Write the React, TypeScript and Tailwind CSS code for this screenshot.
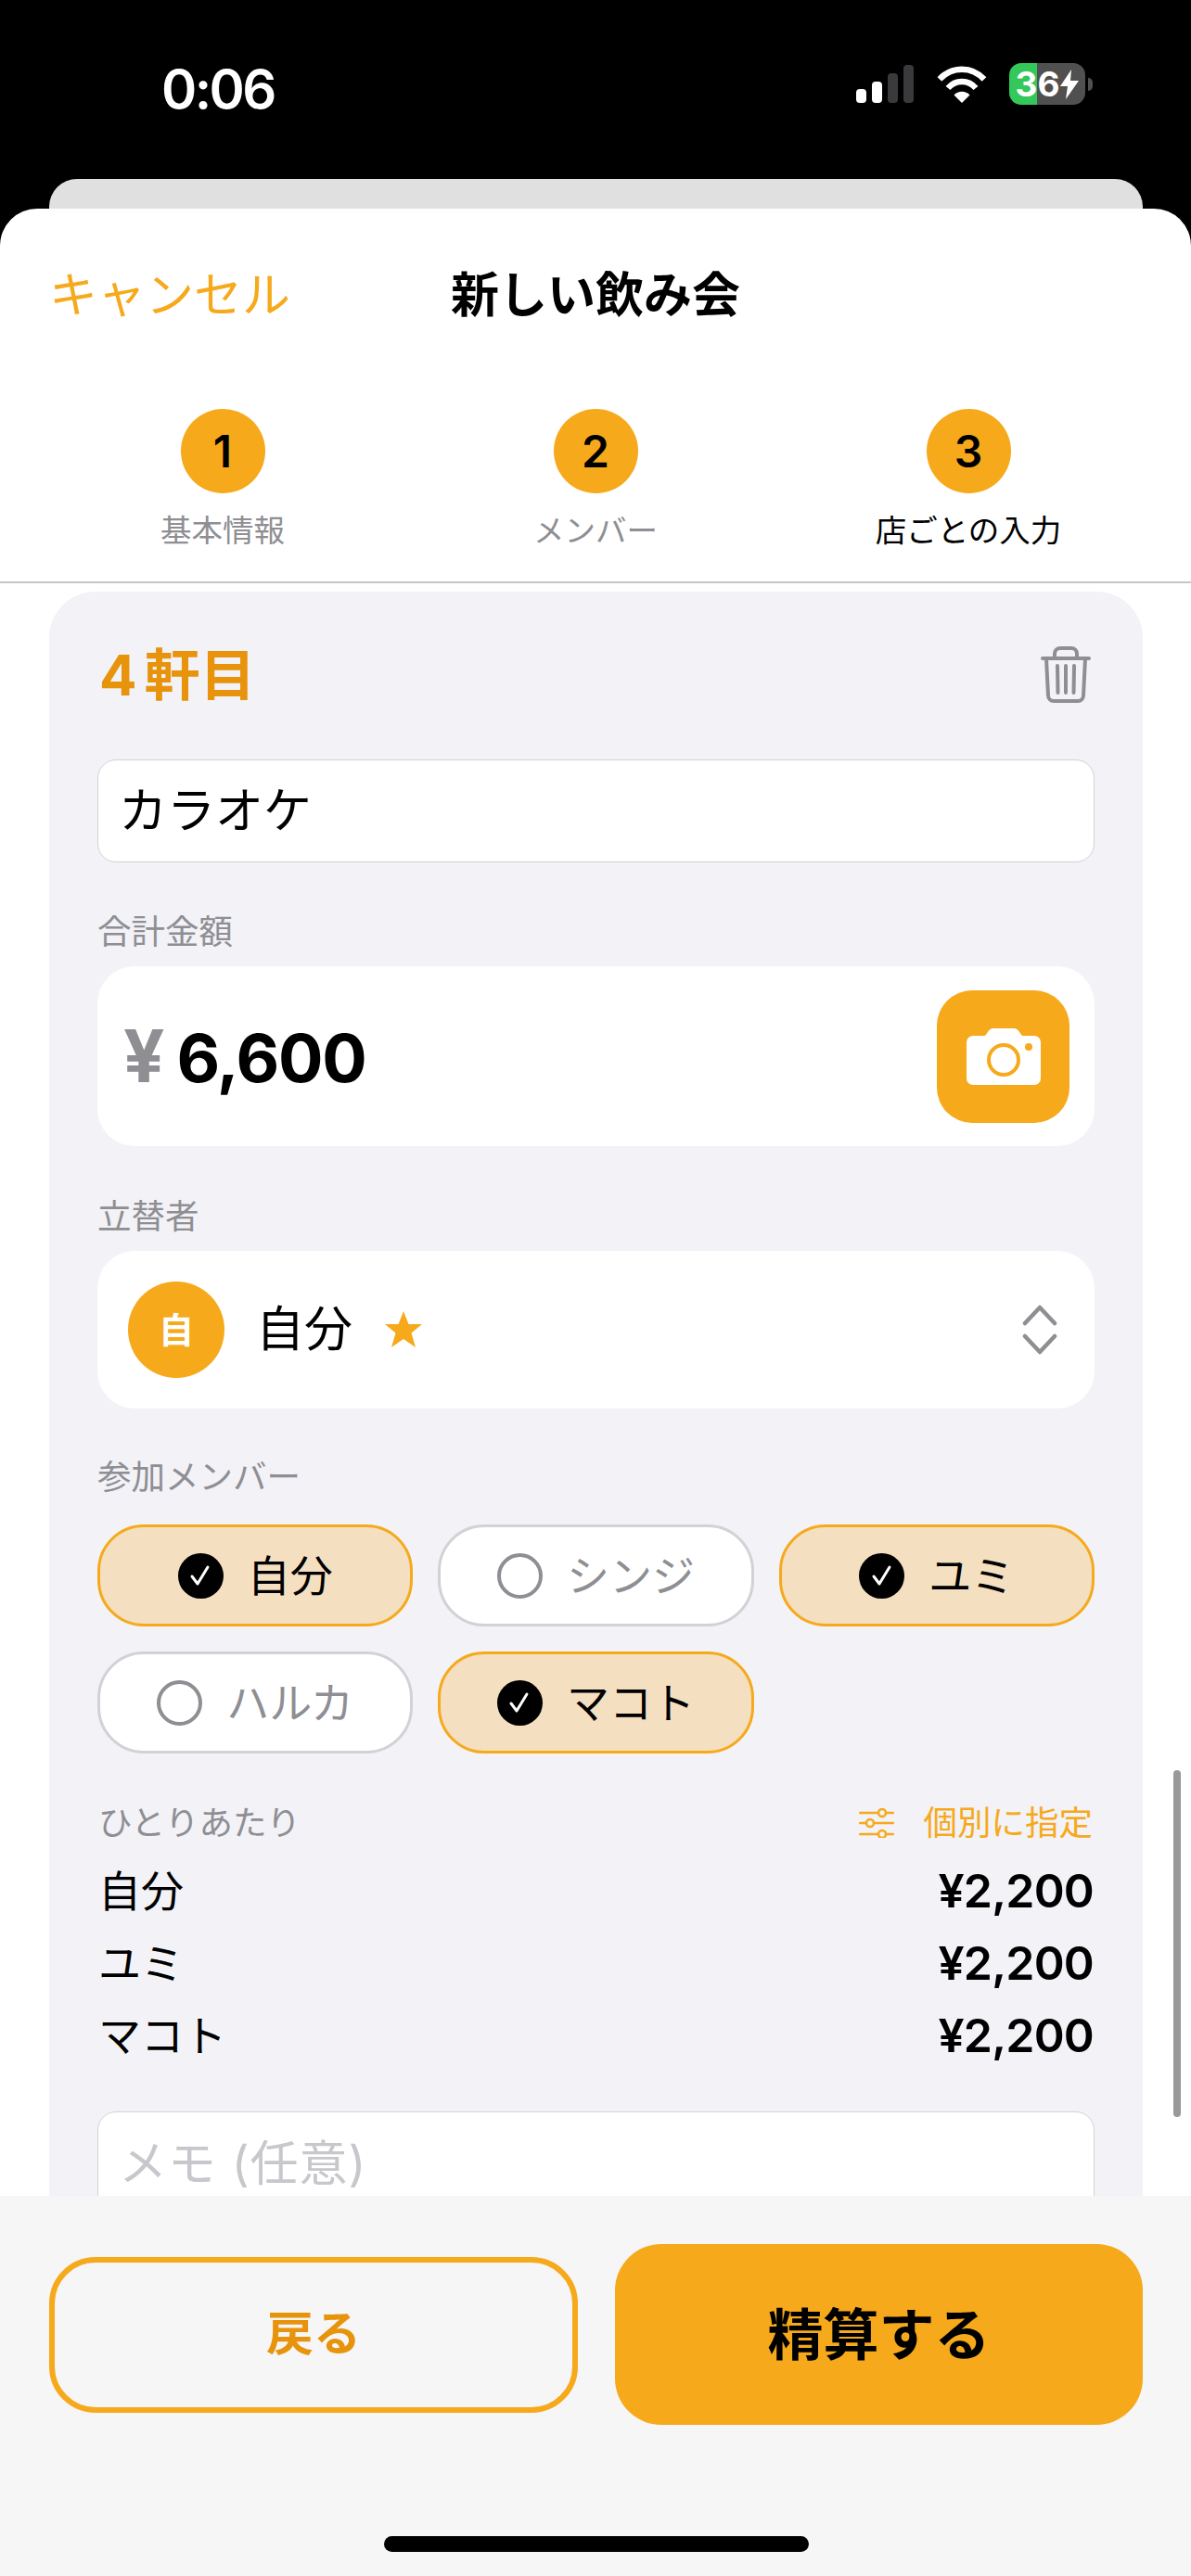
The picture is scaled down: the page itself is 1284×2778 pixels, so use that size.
const font = "font-['Inter','Noto_Sans_CJK_JP',sans-serif]";

const steps = [
	{ num: "1", label: "基本情報", active: false },
	{ num: "2", label: "メンバー", active: false },
	{ num: "3", label: "店ごとの入力", active: true },
];

const members = [
	{ name: "自分", on: true },
	{ name: "シンジ", on: false },
	{ name: "ユミ", on: true },
	{ name: "ハルカ", on: false },
	{ name: "マコト", on: true },
];

const shares = ["自分", "ユミ", "マコト"];

const StatusIcons = () => (
	<div className="flex items-center">
		<svg width="64" height="41" viewBox="0 0 64 41">
			<rect x="1" y="26" width="11" height="15" rx="4" fill="#fff" />
			<rect x="18" y="18" width="11" height="23" rx="4" fill="#fff" />
			<rect x="35" y="9" width="11" height="32" rx="4" fill="#3a3a3c" />
			<rect x="52" y="0" width="11" height="41" rx="4" fill="#3a3a3c" />
		</svg>
		<svg className="ml-[24px]" width="54" height="41" viewBox="0 0 54 41" fill="none">
			<path d="M3 15.5C16 1 38 1 51 15.5" stroke="#fff" strokeWidth="6.5" />
			<path d="M12 25C20 15.5 34 15.5 42 25" stroke="#fff" strokeWidth="6.5" />
			<path d="M27 41L18.5 32.5C23 27.5 31 27.5 35.5 32.5Z" fill="#fff" />
		</svg>
		<div className="ml-[24px] flex h-[45px] w-[82px] items-center justify-center gap-[1px] rounded-[13px] bg-[linear-gradient(90deg,#34c759_36%,#505050_36%)] text-[37px] leading-none font-bold text-white">
			<span>36</span>
			<svg width="20" height="32" viewBox="0 0 20 32">
				<path d="M12 0L0 18H8L6 32L20 12H11Z" fill="#fff" />
			</svg>
		</div>
		<div className="ml-[3px] h-[14px] w-[5px] rounded-r-full bg-[#505050]" />
	</div>
);

const TrashIcon = () => (
	<svg width="54" height="62" viewBox="0 0 54 62" fill="none" stroke="#8e8e93" strokeWidth="4" strokeLinecap="round">
		<path d="M2 13H52" />
		<path d="M15 13V8a6 6 0 0 1 6-6H33a6 6 0 0 1 6 6V13" />
		<path d="M6 13L8 53a6 6 0 0 0 6 6H40a6 6 0 0 0 6-6L48 13" />
		<path d="M18 21L18.5 50M27 21V50M36 21L35.5 50" />
	</svg>
);

const CameraIcon = () => (
	<svg width="80" height="63" viewBox="0 0 80 63">
		<path
			d="M7 9H19C22 9 23 1 29 1H51C57 1 58 9 61 9H73A7 7 0 0 1 80 16V55A7 7 0 0 1 73 62H7A7 7 0 0 1 0 55V16A7 7 0 0 1 7 9Z"
			fill="#fff"
		/>
		<circle cx="40" cy="35" r="16" fill="#fff" stroke="#f6a91b" strokeWidth="4" />
		<circle cx="67" cy="21" r="4" fill="#f6a91b" />
	</svg>
);

const SlidersIcon = () => (
	<svg width="38" height="32" viewBox="0 0 38 32" fill="none" stroke="#f6a91b" strokeWidth="2.5" strokeLinecap="round">
		<path d="M1 5H21M29 5H37M1 16H8M16 16H37M1 28H21M29 28H37" />
		<circle cx="25" cy="5" r="4" />
		<circle cx="12" cy="16" r="4" />
		<circle cx="25" cy="28" r="4" />
	</svg>
);

const Label = ({ text }: { text: string }) => (
	<div className="text-[36.5px] leading-[42px] text-[#8e8e93]">{text}</div>
);

const Chip = ({ name, on }: { name: string; on: boolean }) => (
	<div
		className={`flex h-[110px] items-center justify-center gap-[26px] rounded-[50px] border-[3.5px] ${
			on ? "border-[#f6a91b] bg-[#f4dfc0]" : "border-[#d1d1d6] bg-white"
		}`}>
		{on ? (
			<div className="grid h-[49px] w-[49px] place-items-center rounded-full bg-black">
				<svg width="26" height="26" viewBox="0 0 26 26" fill="none" stroke="#fff" strokeWidth="3" strokeLinecap="round" strokeLinejoin="round">
					<path d="M4 14L10 22L21 4" />
				</svg>
			</div>
		) : (
			<div className="h-[49px] w-[49px] rounded-full border-[4px] border-[#8e8e93]" />
		)}
		<span className={`text-[46px] leading-[56px] ${on ? "text-black" : "text-[#8e8e93]"}`}>{name}</span>
	</div>
);

const App = () => {
	return (
		<div className={`flex h-[2778px] w-[1284px] flex-col overflow-hidden bg-black ${font}`}>
			{/* status bar */}
			<div className="flex h-[193px] shrink-0 items-start justify-between pt-[68px] pr-[106px] pl-[174px]">
				<div className="text-[58px] leading-[56px] font-semibold tracking-[-2.6px] text-white">0:06</div>
				<StatusIcons />
			</div>
			<div className="mr-[52px] ml-[53px] h-[32px] shrink-0 rounded-t-[30px] bg-[#e0e0e0]" />

			{/* sheet */}
			<div className="flex min-h-0 flex-1 flex-col rounded-t-[40px] bg-white">
				<div className="border-b-2 border-[#c6c6c8] pb-[35px]">
					<div className="grid grid-cols-[1fr_auto_1fr] items-center px-[53px] pt-[64px]">
						<div className="text-[52px] leading-[60px] text-[#f6a91b]">キャンセル</div>
						<div className="text-[52px] leading-[60px] font-bold text-black">新しい飲み会</div>
						<div />
					</div>
					<div className="mt-[92px] grid grid-cols-3 px-[39px]">
						{steps.map((step) => (
							<div key={step.num} className="flex flex-col items-center">
								<div className="grid h-[91px] w-[91px] place-items-center rounded-full bg-[#f6a91b] text-[48px] leading-none font-semibold text-black">
									{step.num}
								</div>
								<div className={`mt-[21px] text-[33.5px] leading-[39px] ${step.active ? "text-black" : "text-[#8e8e93]"}`}>
									{step.label}
								</div>
							</div>
						))}
					</div>
				</div>

				<div className="relative min-h-0 flex-1 overflow-hidden pt-[9px]">
					<div className="mr-[52px] ml-[53px] rounded-[50px] bg-[#f2f2f7] px-[52px] pt-[60px] pb-[60px]">
						<div className="flex h-[60px] items-center justify-between pr-[4px] pl-[2px]">
							<div className="text-[60px] leading-[60px] font-bold text-[#e8930c]">
								<span className="mr-[8px]">4</span>軒目
							</div>
							<TrashIcon />
						</div>

						<div className="mt-[61px] flex h-[111px] items-center rounded-[20px] border-[1.5px] border-[#d1d1d6] bg-white px-[22px] text-[52px] text-black">
							カラオケ
						</div>

						<div className="mt-[54px]">
							<Label text="合計金額" />
						</div>
						<div className="mt-[16px] flex h-[194px] items-center justify-between rounded-[40px] bg-white pr-[27px] pl-[28px]">
							<div className="flex items-baseline gap-[13px]">
								<span className="text-[78px] leading-none font-bold text-[#8e8e93]">¥</span>
								<span className="text-[72px] leading-none font-bold tracking-[-1.3px] text-black">6,600</span>
							</div>
							<div className="grid h-[143px] w-[143px] place-items-center rounded-[38px] bg-[#f6a91b]">
								<CameraIcon />
							</div>
						</div>

						<div className="mt-[55px]">
							<Label text="立替者" />
						</div>
						<div className="mt-[16px] flex h-[170px] items-center justify-between rounded-[40px] bg-white pr-[40px] pl-[33px]">
							<div className="flex items-center">
								<div className="grid h-[104px] w-[104px] place-items-center rounded-full bg-[#f6a91b] text-[38px] font-bold text-white">
									自
								</div>
								<span className="ml-[34px] text-[52px] text-black">自分</span>
								<svg className="ml-[34px]" width="42" height="40" viewBox="0 0 42 40">
									<path d="M21 0L26.5 14H41L29.5 23.5L34 39L21 30L8 39L12.5 23.5L1 14H15.5Z" fill="#f6a91b" />
								</svg>
							</div>
							<svg width="38" height="54" viewBox="0 0 38 54" fill="none" stroke="#8e8e93" strokeWidth="4.5" strokeLinecap="round" strokeLinejoin="round">
								<path d="M3 20L19 3L35 20" />
								<path d="M3 34L19 51L35 34" />
							</svg>
						</div>

						<div className="mt-[53px]">
							<Label text="参加メンバー" />
						</div>
						<div className="mt-[30px] grid grid-cols-3 gap-x-[27px] gap-y-[27px]">
							{members.map((member) => (
								<Chip key={member.name} name={member.name} on={member.on} />
							))}
						</div>

						<div className="mt-[54px] flex items-center justify-between pr-[2px] pl-[1px]">
							<Label text="ひとりあたり" />
							<div className="flex items-center gap-[32px] text-[36.5px] leading-[42px] text-[#f6a91b]">
								<SlidersIcon />
								<span>個別に指定</span>
							</div>
						</div>
						<div className="mt-[13px]">
							{shares.map((name) => (
								<div key={name} className="flex h-[78px] items-center justify-between pr-[1px] pl-[1px] text-[46px] text-black">
									<span>{name}</span>
									<span className="text-[50px] font-semibold tracking-[-0.8px]">¥2,200</span>
								</div>
							))}
						</div>

						<div className="mt-[43px] flex h-[114px] items-center rounded-[20px] border-[1.5px] border-[#d1d1d6] bg-white px-[22px] text-[52px] tracking-[1px] text-[#c7c7cc]">
							メモ (任意)
						</div>
					</div>
					{/* scroll indicator */}
					<div className="absolute top-[1280px] right-[11px] h-[374px] w-[8px] rounded-full bg-[#999999]" />
				</div>

				{/* footer */}
				<div className="h-[410px] shrink-0 bg-[#f6f6f7] pt-[52px] pr-[52px] pl-[53px]">
					<div className="flex h-[195px] items-center gap-[40px]">
						<div className="grid h-[168px] w-[570px] place-items-center rounded-[50px] border-[6px] border-[#f6a91b] text-[51px] font-bold text-[#e8930c]">
							戻る
						</div>
						<div className="grid h-[195px] flex-1 place-items-center rounded-[50px] bg-[#f6a91b] text-[60px] font-bold text-black">
							精算する
						</div>
					</div>
					<div className="mx-auto mt-[120px] h-[17px] w-[458px] rounded-full bg-black" />
				</div>
			</div>
		</div>
	);
};

export default App;
